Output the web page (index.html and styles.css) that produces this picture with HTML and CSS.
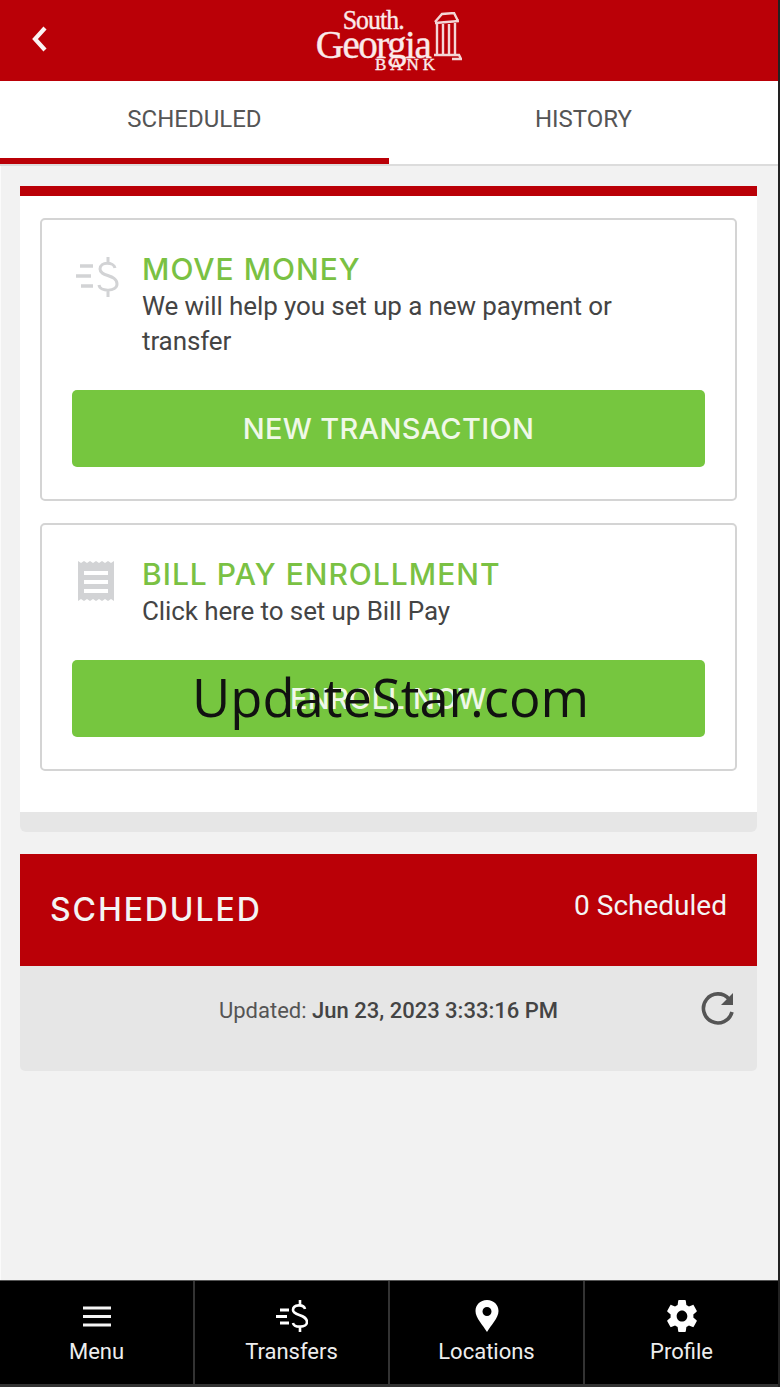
FILE: index.html
```html
<!DOCTYPE html>
<html lang="en">
<head>
  <meta charset="UTF-8">
  <meta name="viewport" content="width=device-width, initial-scale=1.0">
  <title>South Georgia Bank - Transfers</title>
  <link rel="stylesheet" href="styles.css">
</head>
<body>
  <div class="app">
    <header class="top-bar">
      <svg class="back-icon" viewBox="0 0 18 28"><path d="M15 3 L5 14 L15 25" fill="none" stroke="#fbf3f3" stroke-width="4.200"/></svg>
      <div class="logo">
        <div class="logo-text">
          <span class="logo-south">South.</span>
          <span class="logo-georgia">Georgia</span>
          <span class="logo-bank">BANK</span>
        </div>
        <svg class="logo-pillars" viewBox="0 0 30 50">
          <path d="M3 10 L10 2 L22 1 L26 9 M3 11 L27 9 M5 12 V42 M11 12 V42 M17 12 V42 M23 11 V42 M2 43 H27 L29 47 H20" fill="none" stroke="#f4d6d6" stroke-width="2.400"/>
        </svg>
      </div>
    </header>

    <nav class="tabs">
      <div class="tab tab-active">SCHEDULED</div>
      <div class="tab">HISTORY</div>
    </nav>

    <main class="content">
      <section class="panel">
        <div class="card card-move">
          <div class="card-info">
            <svg class="card-icon" viewBox="0 0 44 44">
              <path d="M4 9 H17 M0 19 H15 M5 29 H17" stroke="#d2d3d5" stroke-width="3.600" fill="none"/>
              <path d="M39 11 C38 5 24 4 24 12 C24 20 41 17 41 27 C41 35 24 35 23 28 M32 0 V6 M32 33 V40" stroke="#d2d3d5" stroke-width="3" fill="none"/>
            </svg>
            <div class="card-text">
              <h2>MOVE MONEY</h2>
              <p>We will help you set up a new payment or transfer</p>
            </div>
          </div>
          <button class="action-btn">NEW TRANSACTION</button>
        </div>

        <div class="card card-bill">
          <div class="card-info">
            <svg class="card-icon" viewBox="0 0 44 44">
              <path d="M2 2 L5 4 L8 2 L11 4 L14 2 L17 4 L20 2 L23 4 L26 2 L29 4 L32 2 L35 4 L38 2 V42 L35 40 L32 42 L29 40 L26 42 L23 40 L20 42 L17 40 L14 42 L11 40 L8 42 L5 40 L2 42 Z" fill="#d2d3d5"/>
              <path d="M8 14 H32 M8 23 H32 M8 32 H32" stroke="#fff" stroke-width="4" fill="none"/>
            </svg>
            <div class="card-text">
              <h2>BILL PAY ENROLLMENT</h2>
              <p>Click here to set up Bill Pay</p>
            </div>
          </div>
          <button class="action-btn">ENROLL NOW</button>
        </div>
      </section>
      <div class="panel-foot"></div>

      <section class="scheduled">
        <div class="scheduled-head">
          <h2>SCHEDULED</h2>
          <span class="scheduled-count">0 Scheduled</span>
        </div>
        <div class="scheduled-body">
          <span class="updated">Updated: <b>Jun 23, 2023 3:33:16 PM</b></span>
          <svg class="refresh-icon" viewBox="0 0 36 36">
            <path d="M29 9 A14.500 14.500 0 1 0 32 22" fill="none" stroke="#555" stroke-width="3.600"/>
            <path d="M33 3 V15 H21 Z" fill="#555"/>
          </svg>
        </div>
      </section>
    </main>

    <footer class="bottom-nav">
      <div class="nav-item">
        <svg class="nav-icon" viewBox="0 0 32 32"><path d="M2 8 H30 M2 16.500 H30 M2 25 H30" stroke="#f4f4f4" stroke-width="3" fill="none"/></svg>
        <span>Menu</span>
      </div>
      <div class="nav-item">
        <svg class="nav-icon" viewBox="0 0 32 32">
          <path d="M4 10 H13 M0 16.500 H11 M4 23 H13" stroke="#fff" stroke-width="3" fill="none"/>
          <path d="M29 9 C28 4 17 4 17 10 C17 16 31 14 31 22 C31 28 18 28 17 23 M24 0 V5 M24 27 V32" stroke="#fff" stroke-width="2.600" fill="none"/>
        </svg>
        <span>Transfers</span>
      </div>
      <div class="nav-item">
        <svg class="nav-icon" viewBox="0 0 32 32"><path fill-rule="evenodd" d="M16 0 C9 0 4.500 5 4.500 11 C4.500 18 12 25 16 32 C20 25 27.500 18 27.500 11 C27.500 5 23 0 16 0 Z M16 7 A4.500 4.500 0 1 1 16 16 A4.500 4.500 0 1 1 16 7 Z" fill="#fff"/></svg>
        <span>Locations</span>
      </div>
      <div class="nav-item">
        <svg class="nav-icon" viewBox="1.500 2 21 20" preserveAspectRatio="none"><path fill="#fff" d="M19.430 12.980c.04-.32.07-.64.07-.98s-.03-.66-.07-.98l2.110-1.650c.19-.15.24-.42.12-.64l-2-3.460c-.12-.22-.39-.3-.61-.22l-2.490 1c-.52-.4-1.080-.73-1.690-.98l-.38-2.650C14.460 2.180 14.250 2 14 2h-4c-.25 0-.46.18-.49.42l-.38 2.650c-.61.25-1.170.59-1.690.98l-2.490-1c-.23-.09-.49 0-.61.22l-2 3.460c-.13.220-.07.490.12.640l2.110 1.650c-.04.320-.07.650-.07.980s.03.660.07.980l-2.110 1.650c-.19.150-.24.420-.12.640l2 3.460c.12.220.39.300.61.220l2.490-1c.52.400 1.080.730 1.690.980l.38 2.650c.03.240.24.420.49.420h4c.25 0 .46-.18.49-.42l.38-2.650c.61-.25 1.170-.59 1.690-.98l2.490 1c.23.090.49 0 .61-.22l2-3.460c.12-.22.07-.49-.12-.64l-2.110-1.650zM12 15.500c-1.930 0-3.500-1.570-3.500-3.500s1.570-3.500 3.500-3.500 3.500 1.570 3.500 3.500-1.570 3.500-3.500 3.500z"/></svg>
        <span>Profile</span>
      </div>
    </footer>

    <div class="watermark">UpdateStar.com</div>
  </div>
</body>
</html>
```

FILE: styles.css
```css
* {
  box-sizing: border-box;
}

body {
  margin: 0;
  font-family: Roboto, "Liberation Sans", sans-serif;
  color: #444;
  background-color: #222;
}

.app {
  position: relative;
  width: 778px;
  height: 1387px;
  overflow: hidden;
  display: flex;
  flex-direction: column;
  background-color: #f2f2f2;
}

/* header */
.top-bar {
  height: 81px;
  flex: none;
  display: flex;
  justify-content: center;
  position: relative;
  background-color: #ba0007;
}

.back-icon {
  position: absolute;
  left: 30px;
  top: 25px;
  width: 18px;
  height: 28px;
}

.logo {
  display: flex;
  align-items: flex-start;
  width: 148px;
  height: 81px;
}

.logo-text {
  display: flex;
  flex-direction: column;
  align-items: center;
  width: 116px;
  color: #fbeaea;
  font-family: "Liberation Serif", serif;
  -webkit-text-stroke: 0.4px #fbeaea;
}

.logo-south {
  font-size: 28px;
  line-height: 22px;
  margin-top: 9px;
  letter-spacing: -1px;
  transform: scaleX(0.92);
}

.logo-georgia {
  font-size: 39px;
  line-height: 27px;
  letter-spacing: -1.500px;
}

.logo-bank {
  font-size: 17px;
  line-height: 13px;
  letter-spacing: 4px;
  margin-left: 68px;
  white-space: nowrap;
}

.logo-pillars {
  width: 30px;
  height: 50px;
  margin-top: 12px;
  margin-left: 1px;
}

/* tabs */
.tabs {
  height: 85px;
  flex: none;
  display: flex;
  background-color: #fff;
  border-bottom: 2px solid #dcdcdc;
}

.tab {
  flex: 1;
  padding-top: 23px;
  text-align: center;
  font-size: 24px;
  line-height: 30px;
  color: #555;
}

.tab-active {
  height: 83px;
  border-bottom: 6px solid #ba0007;
}

/* main */
.content {
  flex: 1;
  padding: 20px 21px 0 19px;
  border-left: 1px solid #fbfbfb;
}

.panel {
  height: 626px;
  padding: 22px 20px 0 20px;
  background-color: #fff;
  border-top: 10px solid #ba0007;
}

.panel-foot {
  height: 20px;
  margin-bottom: 22px;
  background-color: #e6e6e6;
  border-radius: 0 0 6px 6px;
}

.card {
  border: 2px solid #d4d4d4;
  border-radius: 5px;
  padding: 0 30px;
  background-color: #fff;
}

.card-move {
  height: 283px;
  margin-bottom: 22px;
}

.card-bill {
  height: 248px;
}

.card-info {
  display: flex;
}

.card-icon {
  width: 44px;
  height: 44px;
  flex: none;
  margin-left: 4px;
  margin-right: 22px;
  margin-top: 37px;
}

.card-bill .card-icon {
  margin-top: 34px;
}

.card-text {
  padding-top: 31px;
}

.card-text h2 {
  margin: 0;
  font-family: Inter, "Liberation Sans", sans-serif;
  font-size: 30px;
  line-height: 36px;
  font-weight: 500;
  letter-spacing: 1px;
  color: #7ac143;
}

.card-text p {
  margin: 2px 0 0;
  font-size: 26px;
  line-height: 35px;
  letter-spacing: -0.100px;
  color: #444;
}

.action-btn {
  display: block;
  width: 100%;
  height: 77px;
  margin-top: 31px;
  border: none;
  border-radius: 5px;
  background-color: #76c63f;
  color: #f0f8e8;
  font-family: Inter, "Liberation Sans", sans-serif;
  font-size: 29px;
  font-weight: 500;
  letter-spacing: 0.300px;
}

/* scheduled block */
.scheduled-head {
  height: 112px;
  display: flex;
  justify-content: space-between;
  align-items: center;
  padding: 0 30px;
  background-color: #ba0007;
  color: #f4f4f4;
}

.scheduled-head h2 {
  margin: -2px 0 0;
  font-family: Inter, "Liberation Sans", sans-serif;
  font-size: 32px;
  font-weight: 500;
  letter-spacing: 1.900px;
}

.scheduled-count {
  font-size: 28px;
  margin-top: -10px;
}

.scheduled-body {
  height: 105px;
  position: relative;
  padding-top: 29px;
  text-align: center;
  background-color: #e6e6e6;
  border-radius: 0 0 5px 5px;
  font-size: 22px;
  line-height: 32px;
  color: #555;
}

.updated b {
  font-weight: 500;
  color: #444;
}

.refresh-icon {
  position: absolute;
  right: 21px;
  top: 24px;
  width: 36px;
  height: 36px;
}

/* bottom nav */
.bottom-nav {
  height: 107px;
  flex: none;
  display: flex;
  background-color: #000;
  border-top: 1px solid #555;
  border-bottom: 3px solid #333;
}

.nav-item {
  flex: 1;
  display: flex;
  flex-direction: column;
  align-items: center;
  padding-top: 19px;
  border-right: 2px solid #333;
  color: #eee;
  font-size: 22px;
  line-height: 30px;
}

.nav-item:last-child {
  border-right: none;
}

.nav-icon {
  width: 32px;
  height: 32px;
  margin-bottom: 5px;
}

.watermark {
  position: absolute;
  left: 192px;
  top: 662px;
  font-family: "Open Sans", sans-serif;
  font-size: 52.500px;
  line-height: 70px;
  color: #111;
}
```
